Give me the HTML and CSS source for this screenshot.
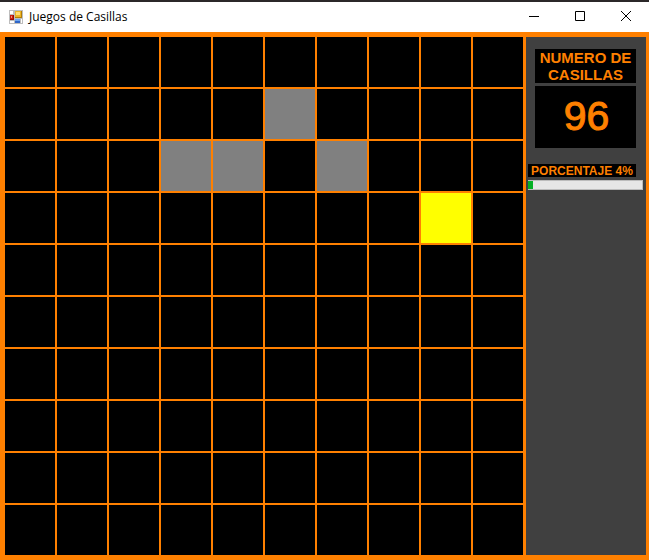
FILE: index.html
```html
<!DOCTYPE html>
<html lang="es">
<head>
<meta charset="utf-8">
<title>Juegos de Casillas</title>
<link rel="stylesheet" href="styles.css">
</head>
<body>
<header class="titlebar">
  <svg class="app-icon" width="14" height="14" viewBox="0 0 14 14" shape-rendering="crispEdges" aria-hidden="true">
    <rect width="14" height="14" fill="#bdbdbd"/>
    <path d="M1 1h3v3H1zM1 11h4v2H1zM12 9h1v4h-1z" fill="#fff"/>
    <rect x="6" y="1" width="7" height="7" fill="#b07c08"/>
    <rect x="6" y="1" width="6" height="6" fill="#ecb424"/>
    <rect x="7" y="2" width="4" height="3" fill="#ffdc70"/>
    <rect x="1" y="5" width="4" height="5" fill="#980c04"/>
    <rect x="1" y="5" width="3" height="4" fill="#c82010"/>
    <rect x="2" y="6" width="1" height="2" fill="#f08a78"/>
    <rect x="6" y="9" width="5" height="4" fill="#2f66c8"/>
    <rect x="6" y="9" width="5" height="2" fill="#6ca4f0"/>
  </svg>
  <h1 class="title">Juegos de Casillas</h1>
  <div class="window-buttons">
    <button class="window-button" type="button" aria-label="Minimizar">
      <svg width="10" height="10" viewBox="0 0 10 10"><path d="M0 5.5h10"/></svg>
    </button>
    <button class="window-button" type="button" aria-label="Maximizar">
      <svg width="10" height="10" viewBox="0 0 10 10"><path d="M.5.5h9v9h-9z"/></svg>
    </button>
    <button class="window-button" type="button" aria-label="Cerrar">
      <svg width="10" height="10" viewBox="0 0 10 10"><path d="M0 0l10 10M10 0L0 10"/></svg>
    </button>
  </div>
</header>
<main class="game">
  <div class="board" id="board"></div>
  <aside class="panel">
    <h2 class="heading">NUMERO DE CASILLAS</h2>
    <output class="count">96</output>
    <label class="percent" for="progress">PORCENTAJE 4%</label>
    <progress class="progress" id="progress" value="4" max="100"></progress>
  </aside>
</main>
<script src="board.js"></script>
</body>
</html>
```
FILE: styles.css
```css
* {
  box-sizing: border-box;
}

body {
  margin: 0;
  min-height: 100vh;
  display: flex;
  flex-direction: column;
  background: #ff8000;
  font-family: "Liberation Sans", Arial, sans-serif;
}

.titlebar {
  display: flex;
  align-items: center;
  height: 32px;
  padding-left: 9px;
  border-top: 2px solid #2b2829;
  background: #fff;
}

.app-icon {
  margin-right: 6px;
}

.title {
  flex: 1;
  margin: 0;
  font: 400 12px/16px "Open Sans", "Segoe UI", sans-serif;
  color: #000;
}

.window-buttons {
  display: flex;
  align-self: stretch;
}

.window-button {
  display: grid;
  place-items: center;
  width: 46px;
  padding: 0 0 2px;
  border: 0;
  background: none;
}

.window-button svg {
  fill: none;
  stroke: #000;
}

.game {
  flex: 1;
  display: flex;
  gap: 3px;
  padding: 5px 3px 5px 5px;
}

.board {
  flex: 1;
  align-self: flex-start;
  display: grid;
  grid-template-columns: repeat(10, 1fr);
  gap: 2px;
}

.cell {
  aspect-ratio: 1;
  background: #000;
}

.cell.visited {
  background: #808080;
}

.cell.current {
  background: #ff0;
}

.panel {
  width: 120px;
  display: flex;
  flex-direction: column;
  padding: 12px 3px 0 2px;
  background: #404040;
  color: #ff8000;
}

.heading,
.count,
.percent {
  background: #000;
  text-align: center;
}

.heading,
.count {
  margin: 0 7px 3px;
}

.heading {
  font-size: 15px;
  line-height: 17px;
}

.count {
  margin-bottom: 16px;
  padding: 0 0 2px 2px;
  font-size: 41px;
  line-height: 60px;
  -webkit-text-stroke: 1px #ff8000;
}

.percent {
  margin: 0 7px 3px 0;
  padding-top: 1px;
  font-size: 12px;
  font-weight: 700;
  line-height: 12px;
  white-space: nowrap;
}

.progress {
  appearance: none;
  width: 100%;
  height: 10px;
  border: 1px solid #bcbcbc;
  border-left: 0;
  background: #e6e6e6;
}

.progress::-webkit-progress-bar {
  background: #e6e6e6;
}

.progress::-webkit-progress-value {
  background: #06b025;
}
```
FILE: board.js
```js
const SIZE = 10;
const visited = new Set(["1,5", "2,3", "2,4", "2,6"]);
const current = "3,8";
const board = document.getElementById("board");

for (let row = 0; row < SIZE; row++) {
  for (let col = 0; col < SIZE; col++) {
    const key = `${row},${col}`;
    const cell = document.createElement("div");
    cell.className = "cell";
    if (visited.has(key)) cell.classList.add("visited");
    if (key === current) cell.classList.add("current");
    board.append(cell);
  }
}
```
